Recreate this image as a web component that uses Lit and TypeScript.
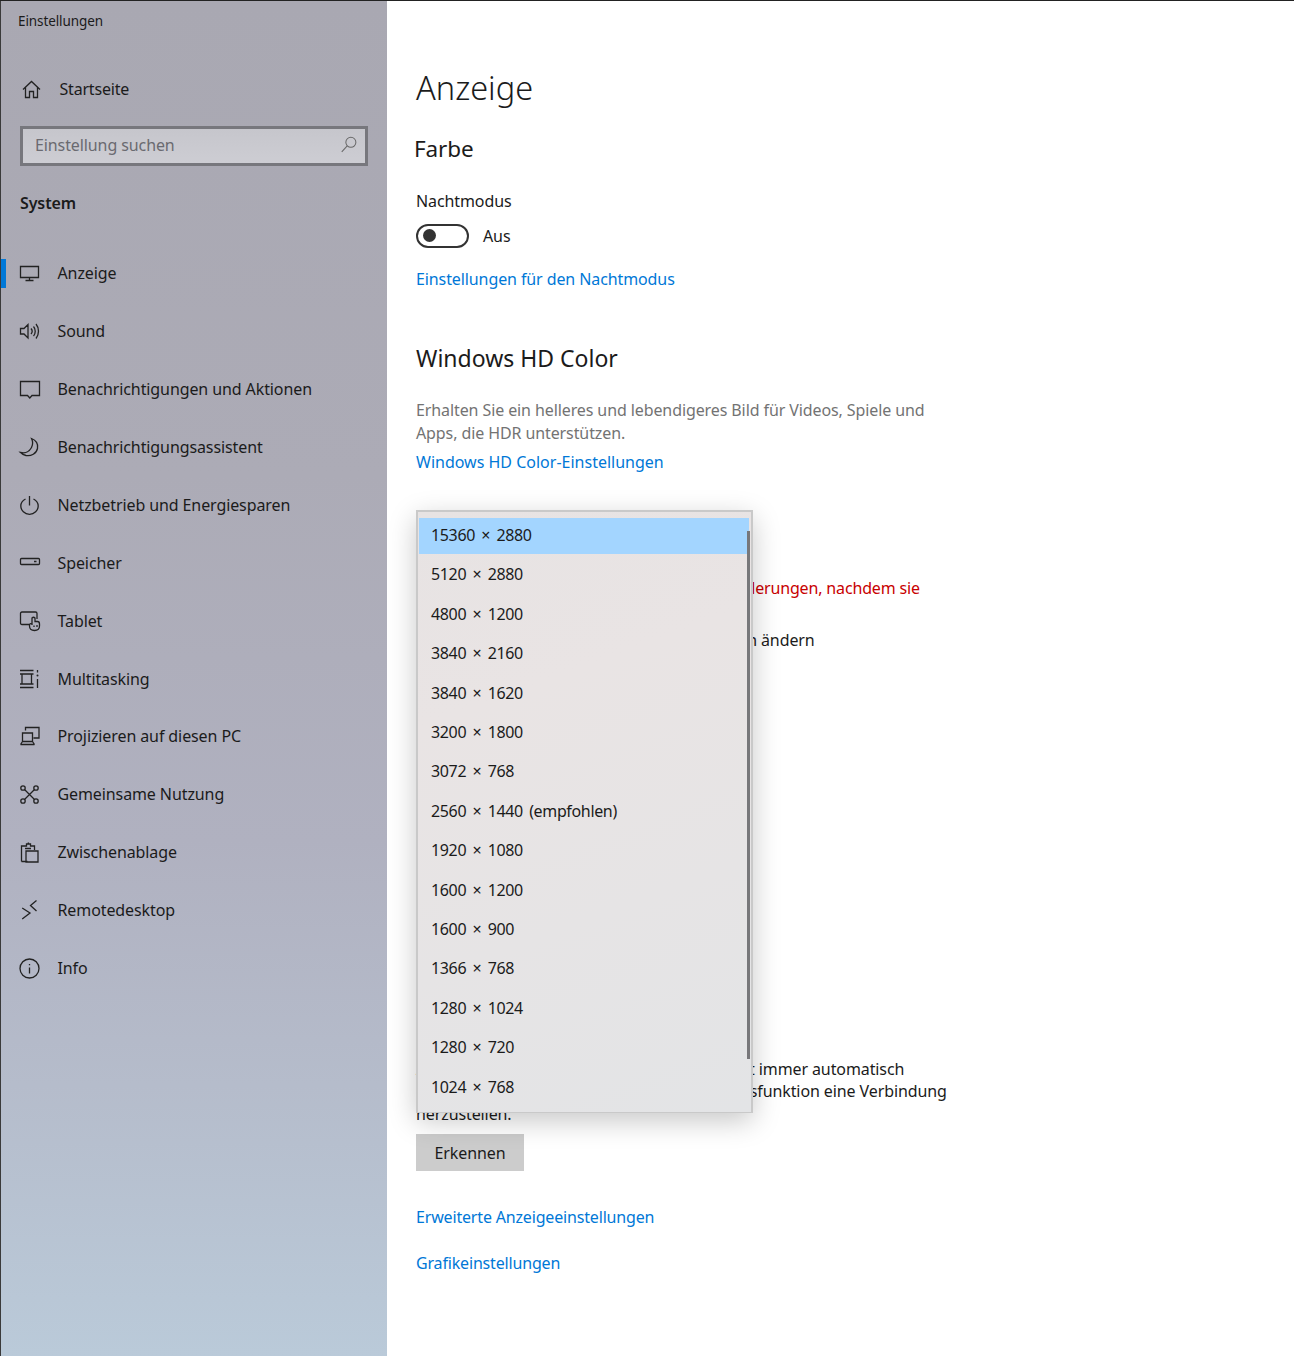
import { LitElement, html, css, svg } from "lit";
import { customElement } from "lit/decorators.js";

const I: Record<string, any> = {
  home: svg`<path d="M3 11.500 11.500 3.500 20 11.500M5.500 9.500V19.500H9.500V13.500H13.500V19.500H17.500V9.500"/>`,
  display: svg`<path d="M2.500 4.500H20.500V15.500H2.500ZM11.500 15.500V18.500M7.500 18.500H15.500"/>`,
  sound: svg`<path d="M2.500 8.500H6L10 4.500V18L6 14H2.500ZM13 8.500C14.300 10 14.300 12.500 13 14M15.500 6.500C17.800 9 17.800 13.500 15.500 16M18 4C21.300 8 21.300 14.500 18 18.500"/>`,
  chat: svg`<path d="M2.500 3.500H21.500V17.500H14L11.800 20 9.500 17.500H2.500Z"/>`,
  moon: svg`<path d="M13.500 2.500C18 4 20.500 8 19.500 12.500 18.500 17.500 13 20.500 8 19.500 6 19 4 18 2.500 16.500 7 17.500 11.500 15.500 13.500 11.500 15 8.500 15 5.500 13.500 2.500Z"/>`,
  power: svg`<path d="M7.500 5C4.500 6.500 2.800 9 2.800 12 2.800 16.500 6.700 20.300 11.500 20.300S20.200 16.500 20.200 12C20.200 9 18.500 6.500 15.500 5M11.500 2V11.500"/>`,
  storage: svg`<path d="M3.500 7.500H20.500Q21.500 7.500 21.500 8.500V12.500Q21.500 13.500 20.500 13.500H3.500Q2.500 13.500 2.500 12.500V8.500Q2.500 7.500 3.500 7.500ZM16 10.500H18.500"/>`,
  tablet: svg`<path d="M11.500 15.500H4Q2.500 15.500 2.500 14V4.500Q2.500 3 4 3H17.500Q19 3 19 4.500V10M14 16V9Q15.500 7.500 17 9V12.500H19.500Q21.500 12.500 21.500 15V17C21.500 20 19.500 21.500 16.500 21.500 13.500 21.500 11.500 20 11.500 17V15.500Q12.500 14 14 15M16 16.500V18M19 16V18"/>`,
  multi: svg`<path d="M2 3.500H15.500M2 20.500H15.500M2 7H15.500M2 17H15.500M4 7V17M13.500 7V17M19.500 3V5.500M19.500 12V21"/><circle cx="19.500" cy="8.500" r="1" fill="#222" stroke="none"/>`,
  project: svg`<path d="M7.500 5.500V2.500H21V13H15.500M2.500 19.500H16.500M4.500 8H14.500V16.500H4.500ZM2.500 19.500 4.500 16.500M16.500 19.500 14.500 16.500"/>`,
  share: svg`<path d="M6.500 6.500 16.500 16.500M16.500 6.500 6.500 16.500"/><circle cx="5" cy="5" r="2.200"/><circle cx="18" cy="5" r="2.200"/><circle cx="5" cy="18" r="2.200"/><circle cx="18" cy="18" r="2.200"/>`,
  clip: svg`<path d="M3.500 20.500V5H8.500V3H12.500V5H16.500V9M9.500 20.500H3.500M10 3.500 10.500 1.500M8 10H20V21H8ZM7 7.500H13"/>`,
  remote: svg`<path d="M4.200 9 12 14 4.200 20M18.500 1.500 12.500 6.500 18.500 12"/>`,
  info: svg`<circle cx="11.500" cy="11.500" r="9.500"/><path d="M11.500 10.500V16.500M11.500 7V8.200"/>`,
  search: svg`<circle cx="13" cy="8" r="5.500"/><path d="M9 12 3 18.500"/>`,
};

const NAV = [
  ["display", "Anzeige"],
  ["sound", "Sound"],
  ["chat", "Benachrichtigungen und Aktionen"],
  ["moon", "Benachrichtigungsassistent"],
  ["power", "Netzbetrieb und Energiesparen"],
  ["storage", "Speicher"],
  ["tablet", "Tablet"],
  ["multi", "Multitasking"],
  ["project", "Projizieren auf diesen PC"],
  ["share", "Gemeinsame Nutzung"],
  ["clip", "Zwischenablage"],
  ["remote", "Remotedesktop"],
  ["info", "Info"],
];

const RES = [
  "15360 × 2880", "5120 × 2880", "4800 × 1200", "3840 × 2160", "3840 × 1620",
  "3200 × 1800", "3072 × 768", "2560 × 1440 (empfohlen)", "1920 × 1080", "1600 × 1200",
  "1600 × 900", "1366 × 768", "1280 × 1024", "1280 × 720", "1024 × 768",
];

const icon = (n: string) => html`<svg class="ico" viewBox="0 0 23 23">${I[n]}</svg>`;

@customElement("app-root")
export class AppRoot extends LitElement {
  static styles = css`
    :host {
      display: block;
      position: relative;
      width: 1294px;
      height: 1356px;
      overflow: hidden;
      background: #fff;
      color: #1b1b1b;
      font-family: "Noto Sans", "Open Sans", sans-serif;
      font-size: 16px;
      letter-spacing: -0.1px;
      line-height: 22.500px;
      border-top: 1px solid #222;
      box-sizing: border-box;
    }
    .app { display: flex; height: 100%; }
    .side {
      width: 386px;
      flex: none;
      border-left: 1px solid #3a3a3a;
      background: linear-gradient(180deg, #a9a8b2 0%, #acabb6 35%, #b0b1c0 62%, #b5bccb 80%, #bacad9 100%);
      display: flex;
      flex-direction: column;
    }
    .apptitle { font-size: 13.500px; line-height: 20px; padding: 10px 0 0 17px; }
    .ico {
      width: 23px; height: 23px; flex: none;
      fill: none; stroke: #222; stroke-width: 1.300;
    }
    .home { display: flex; align-items: center; gap: 17px; padding: 0 0 0 18.500px; height: 40px; margin-top: 38px; letter-spacing: -0.2px; }
    .search {
      margin: 17px 0 0 19px;
      width: 348px; height: 40px;
      box-sizing: border-box;
      border: 3px solid #77777d;
      background: linear-gradient(180deg, #c6c6cc, #cdcdd3);
      display: flex; align-items: center; justify-content: space-between;
      padding: 0 5px 2px 12px;
      color: #6a6a70;
    }
    .search .ico { stroke: #666; width: 21px; height: 21px; stroke-width: 1.100; }
    .sys { font-weight: 600; padding: 26px 0 0 19px; font-size: 16px; }
    nav { margin-top: 30px; }
    .row {
      height: 57.920px;
      display: flex; align-items: center; gap: 16.500px;
      padding-left: 17px;
      position: relative;
    }
    .row.active::before {
      content: ""; position: absolute; left: 0; top: 14px; width: 5px; height: 29px; background: #0078d7;
    }
    main { flex: 1; padding: 0 0 0 29px; }
    h1 { font-weight: 300; font-size: 32.500px; line-height: 44px; margin: 65px 0 0; letter-spacing: 0; }
    h2 { font-weight: 400; font-size: 23px; line-height: 32px; margin: 0; }
    .farbe { margin: 23px 0 0 -2px; font-size: 22.500px; }
    .lbl { margin-top: 25px; }
    .tog { display: flex; align-items: center; gap: 14px; margin-top: 10.500px; height: 25px; }
    .tog span { margin-top: 1.500px; }
    .sw {
      width: 53px; height: 24px; box-sizing: border-box; border: 2.500px solid #333;
      border-radius: 12px; position: relative;
    }
    .sw::after {
      content: ""; position: absolute; left: 4.500px; top: 3px; width: 13px; height: 13px; border-radius: 50%; background: #333;
    }
    a { color: #0078d7; text-decoration: none; display: block; }
    .l1 { margin-top: 19.500px; }
    .hd { margin-top: 52px; letter-spacing: 0; }
    .p { color: #737373; margin-top: 25px; width: 540px; }
    .l2 { margin-top: 7px; letter-spacing: 0; }
    .red { color: #c80000; margin-top: 103px; white-space: nowrap; letter-spacing: -0.160px; }
    .size { margin-top: 30px; white-space: nowrap; }
    .old { margin-top: 406px; width: 560px; white-space: nowrap; }
    .btn {
      margin-top: 9px; width: 108px; height: 37px; background: #ccc; display: flex; align-items: center; justify-content: center;
      font-family: inherit; font-size: inherit; letter-spacing: inherit; color: inherit; border: 0; padding: 0;
    }
    .l3 { margin-top: 35px; letter-spacing: -0.170px; }
    .l4 { margin-top: 23.500px; letter-spacing: -0.170px; }
    .pop {
      position: absolute; left: 416px; top: 509px; width: 337px; height: 603px; box-sizing: border-box;
      border: 2px solid #c9c9c9; border-bottom-width: 1px;
      background: linear-gradient(160deg, #e7e3e3 0%, #e9e4e4 30%, #e3e4e6 100%);
      box-shadow: 0 8px 26px rgba(0,0,0,.22);
      padding: 6px 2px 0 1px;
      letter-spacing: -0.350px;
      word-spacing: 2.500px;
    }
    .opt { height: 39.400px; box-sizing: border-box; display: flex; align-items: center; padding: 0 0 2px 12px; white-space: nowrap; }
    .opt:first-child { height: 36px; margin-bottom: 2px; }
    .opt.sel { background: #a3d5ff; }
    .bar { position: absolute; left: 329px; top: 19px; width: 2.500px; height: 528px; background: #77777a; }
  `;

  render() {
    return html`
      <div class="app">
        <aside class="side">
          <div class="apptitle">Einstellungen</div>
          <div class="home">${icon("home")}<span>Startseite</span></div>
          <div class="search"><span>Einstellung suchen</span>${icon("search")}</div>
          <div class="sys">System</div>
          <nav>
            ${NAV.map(([n, t], i) => html`<div class="row ${i === 0 ? "active" : ""}">${icon(n)}<span>${t}</span></div>`)}
          </nav>
        </aside>
        <main>
          <h1>Anzeige</h1>
          <h2 class="farbe">Farbe</h2>
          <div class="lbl">Nachtmodus</div>
          <div class="tog"><div class="sw"></div><span>Aus</span></div>
          <a class="l1">Einstellungen für den Nachtmodus</a>
          <h2 class="hd">Windows HD Color</h2>
          <div class="p">Erhalten Sie ein helleres und lebendigeres Bild für Videos, Spiele und<br />Apps, die HDR unterstützen.</div>
          <a class="l2">Windows HD Color-Einstellungen</a>
          <div class="red">Einige Apps reagieren erst auf Skalierungsänderungen, nachdem sie</div>
          <div class="size">Größe von Text, Apps und anderen Elementen ändern</div>
          <div class="old">Ältere Anzeigen werden möglicherweise nicht immer automatisch<br />erkannt. Versuchen Sie, durch die Erkennungsfunktion eine Verbindung<br />herzustellen.</div>
          <button class="btn">Erkennen</button>
          <a class="l3">Erweiterte Anzeigeeinstellungen</a>
          <a class="l4">Grafikeinstellungen</a>
        </main>
      </div>
      <div class="pop">
        ${RES.map((r, i) => html`<div class="opt ${i === 0 ? "sel" : ""}">${r}</div>`)}
        <div class="bar"></div>
      </div>
    `;
  }
}
